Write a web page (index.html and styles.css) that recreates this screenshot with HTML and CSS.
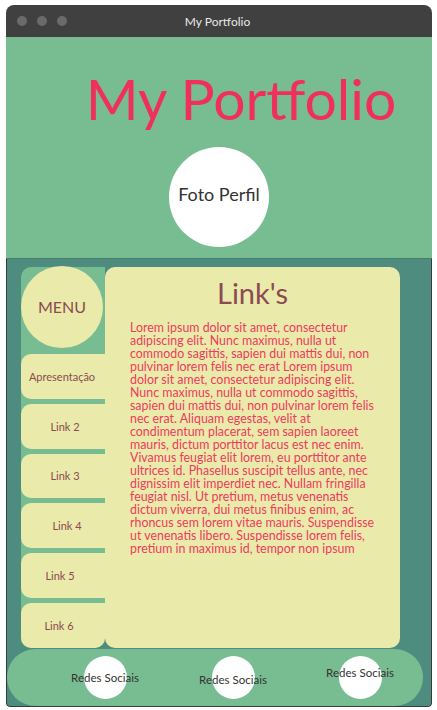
FILE: index.html
```html
<!DOCTYPE html>
<html lang="pt">
<head>
<meta charset="utf-8">
<title>My Portfolio</title>
<link rel="stylesheet" href="styles.css">
</head>
<body>
<div class="window">
  <div class="titlebar">
    <div class="dots"><span></span><span></span><span></span></div>
    <div class="win-title">My Portfolio</div>
  </div>
  <header class="hero">
    <h1 class="hero-title">My Portfolio</h1>
    <div class="photo">Foto Perfil</div>
  </header>
  <main class="body">
    <div class="row">
      <nav class="nav">
        <div class="menu">MENU</div>
        <a class="item item-1">Apresentação</a>
        <a class="item item-2">Link 2</a>
        <a class="item item-3">Link 3</a>
        <a class="item item-4">Link 4</a>
        <a class="item item-5">Link 5</a>
        <a class="item item-6">Link 6</a>
      </nav>
      <section class="content">
        <h2 class="content-title">Link's</h2>
        <p class="content-text">Lorem ipsum dolor sit amet, consectetur<br>
adipiscing elit. Nunc maximus, nulla ut<br>
commodo sagittis, sapien dui mattis dui, non<br>
pulvinar lorem felis nec erat Lorem ipsum<br>
dolor sit amet, consectetur adipiscing elit.<br>
Nunc maximus, nulla ut commodo sagittis,<br>
sapien dui mattis dui, non pulvinar lorem felis<br>
nec erat. Aliquam egestas, velit at<br>
condimentum placerat, sem sapien laoreet<br>
mauris, dictum porttitor lacus est nec enim.<br>
Vivamus feugiat elit lorem, eu porttitor ante<br>
ultrices id. Phasellus suscipit tellus ante, nec<br>
dignissim elit imperdiet nec. Nullam fringilla<br>
feugiat nisl. Ut pretium, metus venenatis<br>
dictum viverra, dui metus finibus enim, ac<br>
rhoncus sem lorem vitae mauris. Suspendisse<br>
ut venenatis libero. Suspendisse lorem felis,<br>
pretium in maximus id, tempor non ipsum</p>
      </section>
    </div>
    <footer class="footer">
      <div class="social social-1"><span class="circle"></span><span class="label">Redes Sociais</span></div>
      <div class="social social-2"><span class="circle"></span><span class="label">Redes Sociais</span></div>
      <div class="social social-3"><span class="circle"></span><span class="label">Redes Sociais</span></div>
    </footer>
  </main>
</div>
</body>
</html>
```
FILE: styles.css
```css
* { box-sizing: border-box; }
html, body { margin: 0; padding: 0; background: #ffffff; }
body { font-family: Lato, "Open Sans", sans-serif; }

.window {
  margin: 5px 5px 0 6px;
  width: 426px;
  border-radius: 8px 8px 4px 4px;
  overflow: hidden;
}

.titlebar {
  height: 32px;
  background: #404040;
  display: flex;
  align-items: center;
}
.dots { display: flex; gap: 10px; padding-left: 11px; }
.dots span { width: 10px; height: 10px; border-radius: 50%; background: #6a6a6a; }
.win-title {
  flex: 1;
  text-align: center;
  margin-left: -64px;
  color: #e8e8e8;
  font-size: 12px;
}

.hero {
  height: 222px;
  background: #78bd92;
  border-bottom: 1px solid #4a7d6c;
  display: flex;
  flex-direction: column;
  align-items: center;
}
.hero-title {
  margin: 33px 0 0 44px;
  font-weight: 400;
  font-size: 57px;
  line-height: 57px;
  color: #f0305a;
}
.photo {
  margin-top: 20px;
  width: 100px;
  height: 100px;
  border-radius: 50%;
  background: #ffffff;
  display: flex;
  align-items: center;
  justify-content: center;
  font-size: 18px;
  color: #333333;
  padding-bottom: 6px;
}

.body {
  background: #4e8c80;
  border-left: 1px solid #3a3a3a;
  border-right: 1px solid #3a3a3a;
  border-bottom: 1px solid #3a3a3a;
  border-radius: 0 0 4px 4px;
  padding-top: 8px;
}
.row { display: flex; padding-left: 14px; height: 381px; }

.nav {
  width: 84px;
  background: #78bd92;
  border-radius: 10px 0 10px 10px;
  display: flex;
  flex-direction: column;
  gap: 5px;
}
.menu {
  width: 82px;
  height: 82px;
  margin-top: -1px;
  border-radius: 50%;
  background: #eaeaaa;
  color: #8c4a52;
  font-size: 16px;
  display: flex;
  align-items: center;
  justify-content: center;
}
.item {
  height: 45px;
  background: #eaeaaa;
  border-radius: 10px 0 0 10px;
  color: #8c4a52;
  font-size: 11px;
  display: flex;
  align-items: center;
  justify-content: center;
}
.item-1 { margin-top: 1px; padding-right: 2px; }
.item-2 { padding-left: 4px; }
.item-3 { padding-left: 4px; }
.item-4 { padding-left: 8px; }
.item-5 { padding-right: 6px; }
.item-6 { padding-right: 8px; border-radius: 10px 0 10px 10px; }

.content {
  width: 295px;
  background: #eaeaaa;
  border-radius: 10px;
  padding: 8px 10px 0 25px;
}
.content-title {
  margin: 0 15px 0 0;
  text-align: center;
  font-weight: 400;
  font-size: 29px;
  line-height: 36px;
  color: #8c4a52;
}
.content-text {
  margin: 10px 0 0;
  font-size: 12.4px;
  line-height: 13px;
  white-space: nowrap;
  color: #f03a5f;
}

.footer {
  margin-top: 1px;
  width: 416px;
  height: 57px;
  background: #78bd92;
  border-radius: 29px;
  display: flex;
  align-items: center;
  padding-left: 64px;
  gap: 60px;
}
.social {
  width: 68px;
  display: grid;
  place-items: center;
}
.social > * { grid-area: 1 / 1; }
.circle { width: 43px; height: 43px; border-radius: 50%; background: #ffffff; }
.label { font-size: 11.5px; color: #333333; white-space: nowrap; }
.social-2 .label { margin-top: 4px; }
.social-3 .label { margin-top: -10px; }
.social-3 { margin-left: -1px; }
```
